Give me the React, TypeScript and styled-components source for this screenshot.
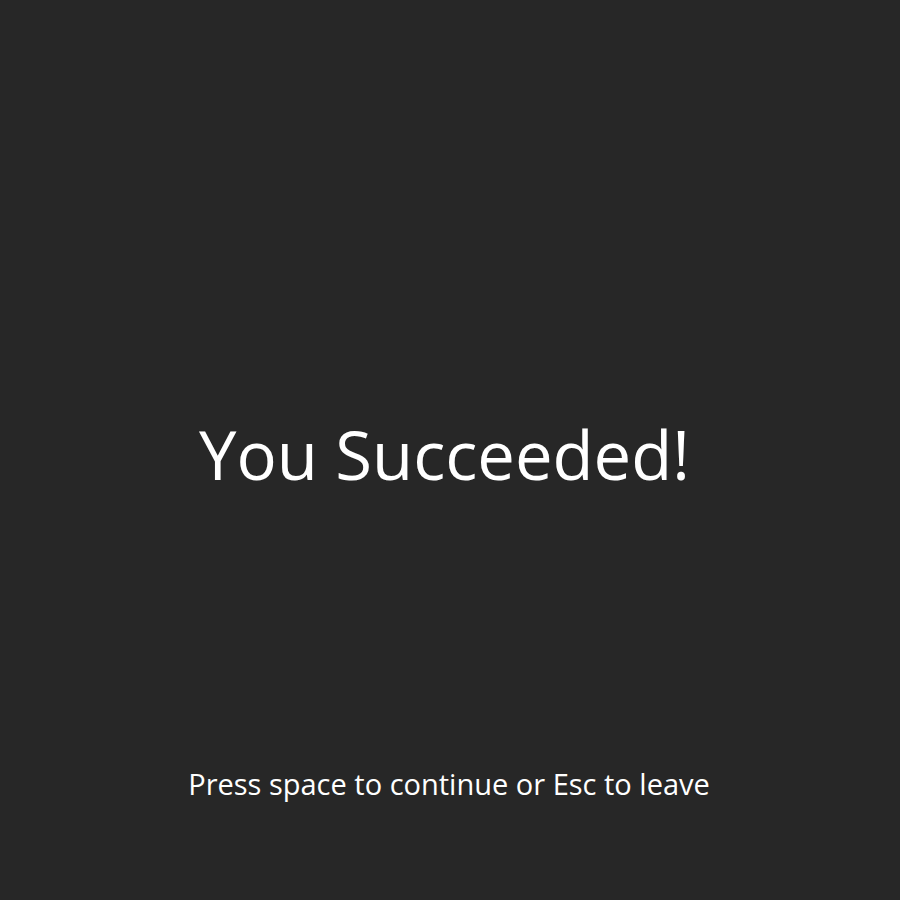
import React from "react";
import styled, { createGlobalStyle } from "styled-components";

const Global = createGlobalStyle`
  html, body { margin: 0; padding: 0; background: #272727; }
  body { font-family: "Open Sans", "Noto Sans", sans-serif; }
`;

const Screen = styled.div`
  height: 900px;
  display: grid;
  grid-template-rows: 1fr auto 1fr;
  justify-items: center;
  color: #ffffff;
`;

const Title = styled.h1`
  grid-row: 2;
  margin: 8px 0 0;
  padding-right: 11px;
  font-size: 67px;
  font-weight: 400;
  line-height: 1;
`;

const Hint = styled.div`
  grid-row: 3;
  align-self: end;
  padding-right: 2px;
  font-size: 29px;
  line-height: 1;
  padding-bottom: 102px;
`;

export default function App() {
  return (
    <>
      <Global />
      <Screen>
        <Title>You Succeeded!</Title>
        <Hint>Press space to continue or Esc to leave</Hint>
      </Screen>
    </>
  );
}
